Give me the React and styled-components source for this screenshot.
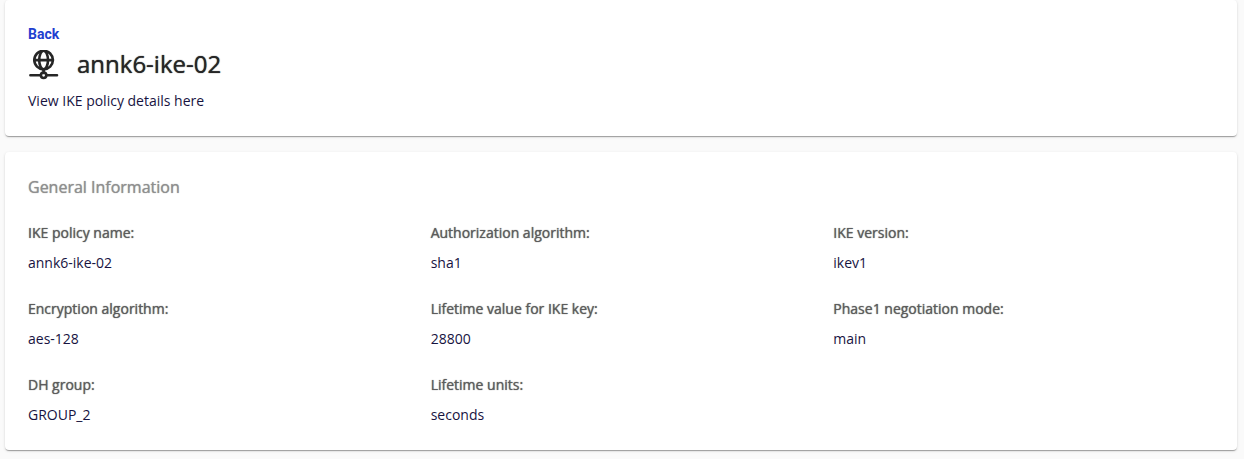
import React from 'react'
import styled, { createGlobalStyle } from 'styled-components'

const details = [
    { label: 'IKE policy name:', value: 'annk6-ike-02' },
    { label: 'Authorization algorithm:', value: 'sha1' },
    { label: 'IKE version:', value: 'ikev1' },
    { label: 'Encryption algorithm:', value: 'aes-128' },
    { label: 'Lifetime value for IKE key:', value: '28800' },
    { label: 'Phase1 negotiation mode:', value: 'main' },
    { label: 'DH group:', value: 'GROUP_2' },
    { label: 'Lifetime units:', value: 'seconds' },
]

function NetworkIcon() {
    return (
        <Icon viewBox="0 0 31 30" aria-hidden="true">
            <circle cx="15.6" cy="10.1" r="9.3" />
            <ellipse cx="15.6" cy="10.1" rx="4.4" ry="9.3" />
            <path d="M6.3 10.1h18.6M15.6 20v3" />
            <path d="M2.4 25.3h10.4M18.6 25.3h10.4" />
            <circle cx="15.6" cy="25.3" r="2.7" />
        </Icon>
    )
}

function App() {
    return (
        <>
            <GlobalStyle />
            <Page>
                <HeaderCard>
                    <BackLink href="#">Back</BackLink>
                    <TitleRow>
                        <NetworkIcon />
                        <Title>annk6-ike-02</Title>
                    </TitleRow>
                    <Description>View IKE policy details here</Description>
                </HeaderCard>

                <Card>
                    <SectionTitle>General Information</SectionTitle>
                    <Details>
                        {details.map((item) => (
                            <div key={item.label}>
                                <Label>{item.label}</Label>
                                <Value>{item.value}</Value>
                            </div>
                        ))}
                    </Details>
                </Card>
            </Page>
        </>
    )
}

const GlobalStyle = createGlobalStyle`
    * {
        box-sizing: border-box;
    }

    body {
        margin: 0;
        background-color: #fafafa;
        color: #17133f;
        font-family: 'Open Sans', 'Liberation Sans', sans-serif;
        font-size: 14px;
        line-height: 20px;
    }
`

const Page = styled.main`
    display: flex;
    flex-direction: column;
    gap: 16px;
    padding: 0 7px 8px 5px;
`

const Card = styled.section`
    padding: 23px 25px 25px 23px;
    background-color: white;
    border-radius: 4px;
    box-shadow: 0 2px 1px -1px rgba(0, 0, 0, .2), 0 1px 1px 0 rgba(0, 0, 0, .14), 0 1px 3px 0 rgba(0, 0, 0, .12);
`

const HeaderCard = styled(Card)`
    display: flex;
    flex-direction: column;
    align-items: flex-start;
`

const BackLink = styled.a`
    color: #1f3fd0;
    font-family: Roboto, 'Liberation Sans', sans-serif;
    font-weight: 700;
    line-height: 22px;
    text-decoration: none;
`

const TitleRow = styled.div`
    display: flex;
    align-items: flex-end;
    gap: 18px;
    padding-top: 3px;
`

const Icon = styled.svg`
    width: 31px;
    height: 30px;
    fill: none;
    stroke: #262626;
    stroke-width: 2.6;
    stroke-linecap: round;
`

const Title = styled.h1`
    margin: 0;
    color: #262626;
    font-size: 24px;
    font-weight: 400;
    line-height: 32px;
    text-shadow: 0 0 1px currentColor;
`

const Description = styled.p`
    margin: 11px 0 0;
`

const SectionTitle = styled.h2`
    margin: 0 0 24px;
    color: #8f8f8f;
    font-size: 16px;
    font-weight: 400;
    line-height: 24px;
    text-shadow: 0 0 1px currentColor;
`

const Details = styled.dl`
    display: grid;
    grid-template-columns: repeat(3, 1fr);
    gap: 26px 24px;
    margin: 0;
`

const Label = styled.dt`
    margin-bottom: 10px;
    color: #5c5c5c;
    text-shadow: 0 0 1px currentColor;
`

const Value = styled.dd`
    margin: 0;
`

export default App;
